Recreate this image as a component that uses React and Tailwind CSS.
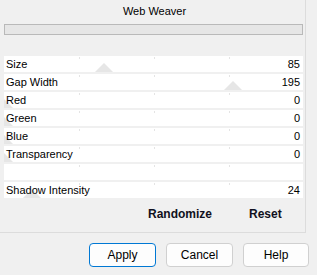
const rows = [
  { label: 'Size', value: 85 },
  { label: 'Gap Width', value: 195 },
  { label: 'Red', value: 0 },
  { label: 'Green', value: 0 },
  { label: 'Blue', value: 0 },
  { label: 'Transparency', value: 0 },
  { label: '', value: null },
  { label: 'Shadow Intensity', value: 24 },
];

function SliderRow({ label, value }) {
  // marker position on a 0..255 scale across the row width
  const left = value === null ? null : (value * 299) / 255 - 9;
  return (
    <div className="relative h-[16px] bg-white overflow-hidden flex items-center justify-between pl-[2px] pr-[3px]">
      <span className="absolute left-[75px] top-[1px] w-px h-[2px] bg-[#e4e4e4]" />
      <span className="absolute left-[150px] top-[1px] w-px h-[2px] bg-[#e4e4e4]" />
      <span className="absolute left-[225px] top-[1px] w-px h-[2px] bg-[#e4e4e4]" />
      {left !== null && (
        <svg className="absolute bottom-0" style={{ left }} width="18" height="9" viewBox="0 0 18 9">
          <polygon points="0,9 9,0 18,9" fill="#e6e6e6" />
        </svg>
      )}
      <span className="relative">{label}</span>
      <span className="relative">{value}</span>
    </div>
  );
}

export default function App() {
  return (
    <div className="w-[317px] h-[275px] bg-[#f0f0f0] overflow-hidden text-black" style={{ fontFamily: '"Liberation Sans", Arial, sans-serif' }}>
      <div className="w-[306px] h-[233px] border-r border-b border-[#dcdcdc] flex flex-col">
        <div className="h-[24px] flex items-center justify-center text-[11px] pl-[4px] pb-[1px]">Web Weaver</div>
        <div className="ml-[4px] w-[299px] h-[11px] border border-[#b9b9b9] bg-[#e6e6e6]" />
        <div className="ml-[4px] w-[299px] mt-[21px] flex flex-col gap-[2px] text-[11px] leading-none">
          {rows.map((r, i) => (
            <SliderRow key={i} label={r.label} value={r.value} />
          ))}
        </div>
        <div className="ml-[4px] w-[299px] flex-1 flex items-center text-[12px] font-bold text-[#101020] pb-[2px]">
          <span className="ml-[144px]">Randomize</span>
          <span className="ml-[37px]">Reset</span>
        </div>
      </div>
      <div className="flex gap-[10px] ml-[89px] mt-[10px] text-[12px]">
        <button className="w-[67px] h-[24px] rounded-[4px] border border-[#0078d4] bg-[#fdfdfd]">Apply</button>
        <button className="w-[67px] h-[24px] rounded-[4px] border border-[#d0d0d0] bg-[#fdfdfd]">Cancel</button>
        <button className="w-[66px] h-[24px] rounded-[4px] border border-[#d0d0d0] bg-[#fdfdfd]">Help</button>
      </div>
    </div>
  );
}
